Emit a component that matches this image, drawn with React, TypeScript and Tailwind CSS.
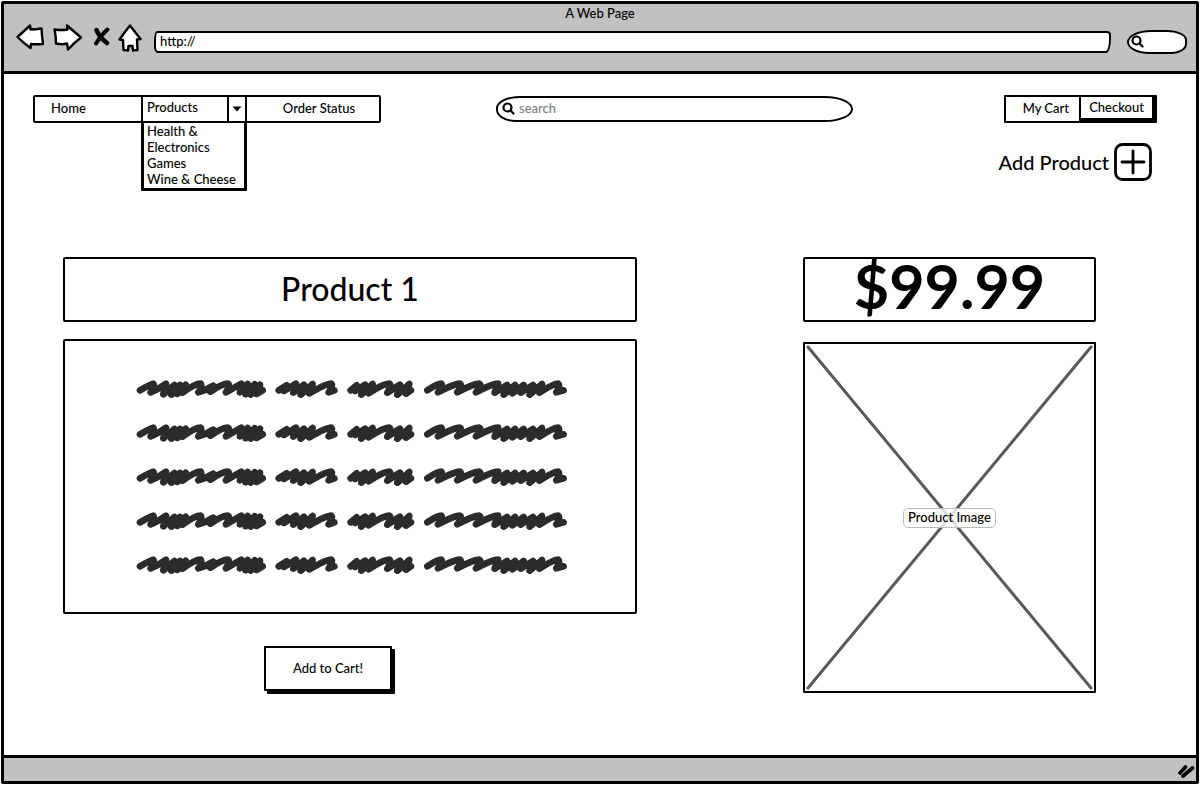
import React from "react";

const categories = ["Health &", "Electronics", "Games", "Wine & Cheese"];

const descriptionLines = [1, 2, 3, 4, 5];

function BackIcon() {
  return (
    <svg width="30" height="28" viewBox="0 0 30 28" fill="#fff" stroke="#000" strokeWidth="2.4" strokeLinejoin="round" aria-hidden="true">
      <path d="M1.500 13 L14 1.500 L14.500 5.500 Q20 5.500 25.500 4.500 Q26 13 27 20 Q20 20.500 15 20 L14.500 24 Q8 19.500 1.500 13Z" />
    </svg>
  );
}

function ForwardIcon() {
  return (
    <svg width="30" height="28" viewBox="0 0 30 28" fill="#fff" stroke="#000" strokeWidth="2.4" strokeLinejoin="round" aria-hidden="true">
      <path d="M1.500 5.500 Q8 6.500 14.500 5.500 L14 1.500 Q21 7.500 28 13.500 Q22 18 15 25.500 L14 19.500 Q9 21 3 19.500 Q3 12 1.500 5.500Z" />
    </svg>
  );
}

function StopIcon() {
  return (
    <svg width="18" height="22" viewBox="0 0 18 22" fill="none" stroke="#000" strokeLinecap="round" aria-hidden="true">
      <path d="M4.500 3 Q7 10 15 16" strokeWidth="4.500" />
      <path d="M15.500 2.500 Q9 8 4 16.500" strokeWidth="4" />
    </svg>
  );
}

function HomeIcon() {
  return (
    <svg width="24" height="29" viewBox="0 0 24 29" fill="#fff" stroke="#000" strokeWidth="2.400" strokeLinejoin="round" aria-hidden="true">
      <path d="M12 1.500 Q17 8 22.500 15 L19 15.500 L19.500 26 L15 26.500 L14.500 22 L10.500 22 L10 26.500 L5.500 26 L5 16 L1.500 15.500 Q6 9 12 1.500Z" />
    </svg>
  );
}

function SearchIcon() {
  return (
    <svg className="shrink-0" width="13" height="13" viewBox="0 0 13 13" fill="none" stroke="#000" strokeWidth="2.200" strokeLinecap="round" aria-hidden="true">
      <circle cx="5.500" cy="5.500" r="4" />
      <path d="M8.500 8.500 L11.500 11.500" />
    </svg>
  );
}

function Scribble() {
  return (
    <svg className="max-w-full" width="432" height="20" viewBox="18 26 1296 60" fill="none" stroke="#2b2b2b" strokeWidth="20" strokeLinecap="round" strokeLinejoin="round" aria-hidden="true">
      <path d="M30 60 Q60 42 70 40 Q76 44 62 66 Q84 58 108 40 L100 72 L133 44 L124 73 L150 44 L142 71 L167 43 L157 67 Q195 40 212 40 Q218 46 205 66 Q228 60 250 46 L241 64 Q276 40 294 40 Q302 44 288 66 L334 40 L330 66 L353 41 L347 72 L374 42 L362 73 L390 43 L380 71 L398 60" />
      <path d="M446 60 L470 45 L462 62 L498 40 L490 67 L522 43 L512 73 L548 41 L538 69 Q588 40 604 40 Q610 46 596 66 L613 60" />
      <path d="M662 60 L680 45 L676 62 L706 43 L694 73 L728 41 L716 69 Q760 40 778 40 Q786 44 772 67 L810 43 L802 73 L838 41 L828 70 L843 60" />
      <path d="M892 60 Q922 40 934 40 Q940 46 924 66 Q974 40 990 40 Q998 44 982 66 Q1032 40 1048 40 Q1056 44 1038 66 Q1088 40 1104 40 L1094 67 L1131 44 L1121 73 L1155 44 L1147 69 L1181 44 L1172 67 L1209 44 L1199 73 L1236 41 L1228 67 Q1270 40 1285 40 Q1292 46 1279 66 L1301 60" />
    </svg>
  );
}

function BrowserBar() {
  return (
    <header className="flex h-[70px] flex-col border-b-3 border-black bg-[#c1c1c1]">
      <p className="text-center text-[13px] leading-[18px]">A Web Page</p>
      <div className="flex h-8 items-center pl-3 pr-[9px]">
        <div className="flex items-center">
          <button type="button" aria-label="Back"><BackIcon /></button>
          <button type="button" aria-label="Forward" className="ml-[7px]"><ForwardIcon /></button>
          <button type="button" aria-label="Stop" className="ml-[9px]"><StopIcon /></button>
          <button type="button" aria-label="Home page" className="ml-2"><HomeIcon /></button>
        </div>
        <input
          type="text"
          aria-label="Address"
          defaultValue="http://"
          className="ml-3 mt-2 h-[22px] min-w-0 flex-1 rounded-[3px_4px_5px_4px/10px_4px_14px_6px] border-2 border-black bg-white px-1 pb-[3px] text-[13px] outline-none"
        />
        <label className="ml-4 mt-[7px] flex h-6 w-15 items-center rounded-[24px_20px_16px_22px/12px_10px_10px_12px] border-2 border-black bg-white pl-[2px]">
          <SearchIcon />
          <input type="text" aria-label="Web search" className="w-full min-w-0 bg-transparent text-[13px] outline-none" />
        </label>
      </div>
    </header>
  );
}

function StoreNav() {
  return (
    <nav className="flex h-7 w-[348px] rounded-[2px] border-2 border-black text-[13px]">
      <a href="#home" className="flex w-[106px] items-center pl-4">Home</a>
      <div className="relative w-[106px]">
        <div className="flex h-6 border-x-2 border-black">
          <button type="button" aria-expanded="true" className="flex flex-1 items-center pb-[2px] pl-1">Products</button>
          <button type="button" aria-label="Show product categories" className="flex w-[18px] items-center justify-center border-l-2 border-black">
            <svg width="10" height="6" viewBox="0 0 10 6" aria-hidden="true"><path d="M0.500 0.500 H9.500 L5 5.500Z" /></svg>
          </button>
        </div>
        <ul className="absolute inset-x-0 top-6 rounded-[1px] border-3 border-t-2 border-black bg-white pb-px pl-[3px] leading-4">
          {categories.map((name) => (
            <li key={name}><a href="#products" className="block whitespace-nowrap">{name}</a></li>
          ))}
        </ul>
      </div>
      <a href="#orders" className="flex flex-1 items-center justify-center pl-3">Order Status</a>
    </nav>
  );
}

export default function App() {
  return (
    <div className="flex min-h-screen bg-white p-px font-['Lato','Open_Sans',sans-serif] font-medium text-black">
      <div className="flex flex-1 flex-col rounded-[2px] border-3 border-black">
        <BrowserBar />
        <main className="flex-1 pb-15 pt-[21px]">
          <div className="flex items-center pl-[29px] pr-[39px]">
            <StoreNav />
            <label className="ml-[115px] mr-[151px] flex h-[26px] flex-1 items-center gap-1 rounded-[24px_28px_28px_20px/12px_13px_13px_12px] border-2 border-black pb-px pl-1">
              <SearchIcon />
              <input type="search" aria-label="Search products" placeholder="search" className="min-w-0 flex-1 bg-transparent text-[13px] outline-none placeholder:text-[#808080]" />
            </label>
            <div className="flex h-7 w-[153px] rounded-[1px] border-2 border-black text-[13px]">
              <a href="#cart" className="flex flex-1 items-center justify-end pr-[10px]">My Cart</a>
              <button type="button" className="w-[76px] border-b-3 border-l-2 border-r-3 border-black">Checkout</button>
            </div>
          </div>

          <div className="mt-5 flex justify-end pr-11">
            <button type="button" className="flex items-center gap-[5px] text-[20px]">
              Add Product
              <svg width="38" height="38" viewBox="0 0 38 38" fill="none" stroke="#000" strokeWidth="2.800" strokeLinecap="round" aria-hidden="true">
                <rect x="1.500" y="1.500" width="35" height="35" rx="7" />
                <path d="M19 8 V30 M8 19 H30" />
              </svg>
            </button>
          </div>

          <div className="mt-[76px] flex items-start pl-[59px] pr-[100px]">
            <section className="flex flex-1 flex-col">
              <h1 className="flex h-[65px] items-center justify-center rounded-[2px] border-2 border-black pb-[2px] text-[32px]">Product 1</h1>
              <div className="mt-[17px] flex flex-col gap-6 rounded-[2px] border-2 border-black pb-[37px] pl-[71px] pr-16 pt-[38px]">
                {descriptionLines.map((line) => <Scribble key={line} />)}
              </div>
              <button type="button" className="ml-[201px] mt-8 h-[45px] w-32 self-start rounded-[1px] border-2 border-black bg-white text-[13px] shadow-[3px_3px_0_0_#000]">Add to Cart!</button>
            </section>
            <aside className="ml-[166px] flex w-[293px] flex-col">
              <p className="flex h-[65px] items-center justify-center rounded-[2px] border-2 border-black pb-2 text-[61px] font-bold leading-none">$99.99</p>
              <figure className="relative mt-5 flex h-[351px] items-center justify-center rounded-[1px] border-2 border-black p-px">
                <svg className="h-full w-full" viewBox="0 0 287 345" preserveAspectRatio="none" stroke="#595959" strokeWidth="3" strokeLinecap="round" aria-hidden="true">
                  <path d="M2 2 L285 343 M285 2 L2 343" />
                </svg>
                <figcaption className="absolute rounded-[5px] border border-[#bbbbbb] bg-white/80 px-1 pb-[2px] text-[13px] leading-4">Product Image</figcaption>
              </figure>
            </aside>
          </div>
        </main>
        <footer className="flex h-[26px] items-center justify-end border-t-3 border-black bg-[#c1c1c1] pr-px">
          <svg width="18" height="16" viewBox="0 0 18 16" fill="none" stroke="#000" strokeWidth="3.600" strokeLinecap="round" aria-hidden="true">
            <path d="M3 11 L8.500 5 M6 14 L15.500 6" />
          </svg>
        </footer>
      </div>
    </div>
  );
}
